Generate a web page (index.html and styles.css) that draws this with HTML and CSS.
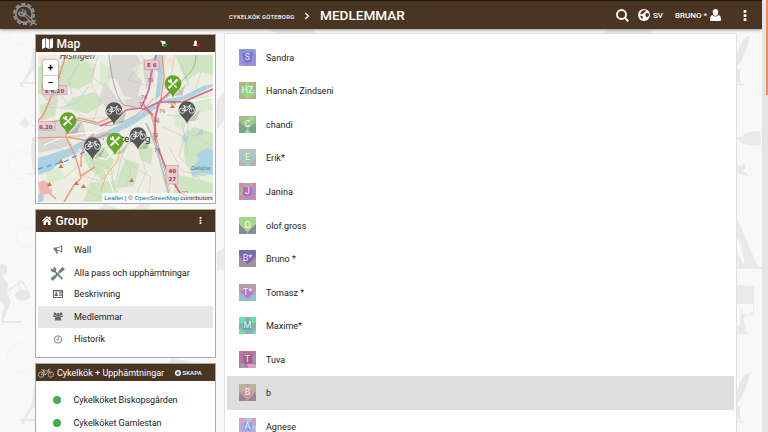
FILE: index.html
```html
<!DOCTYPE html>
<html lang="sv">
<head>
<meta charset="utf-8">
<title>Medlemmar</title>
<link rel="stylesheet" href="styles.css">
</head>
<body>
<svg class="defs" width="0" height="0">
  <defs>
    <symbol id="bike" viewBox="0 0 30 18"><g fill="none" stroke="currentColor" stroke-width="1.5"><circle cx="6" cy="12" r="5"/><circle cx="24" cy="12" r="5"/><path d="M6 12 11 5H20L14 12H6M14 12 9.500 3M7 3H12M24 12 19 2H23"/></g></symbol>
    <symbol id="tools" viewBox="0 0 24 24"><path fill="none" stroke="currentColor" stroke-width="3" d="M6 7 20 21M3 22 14 11"/><path fill="currentColor" d="M1 3 5 6 6 1Q12 3 9 9L6 10Q1 10 1 3ZM13 9 20 1 24 5 16 12ZM1 20 8 14 11 17 4 24Z"/></symbol>
    <symbol id="dots" viewBox="0 0 4 12"><path fill="currentColor" d="M.5 0h3v3h-3zM.5 4.500h3v3h-3zM.5 9h3v3h-3z"/></symbol>
    <symbol id="pin" viewBox="0 0 18 23"><path fill="currentColor" d="M9 22.500C7 17 .5 14 .5 8.500A8.500 8.300 0 0 1 17.500 8.500C17.500 14 11 17 9 22.500Z"/></symbol>
    <symbol id="runner" viewBox="0 0 34 67"><g fill="#e7e7e7"><path d="M7 1Q12 2 11 8Q10 12 6 12L12 21 11 30 15 39 7 58H25V60H5L8 42 0 36V2Z"/><ellipse cx="27" cy="32" rx="8" ry="5.500"/></g><path fill="none" stroke="#e7e7e7" stroke-width="1.500" d="M10 29 23 20M24 29 23 18Q28 18 32 29"/></symbol>
    <symbol id="walker" viewBox="0 0 18 44"><path fill="#e8e8e8" d="M14 4Q18 2 18 6V36H15V25L6 37 3 39 12 22 13 12ZM0 38H16V40H4L5 43H2Z"/></symbol>
    <symbol id="feather" viewBox="0 0 14 56"><path fill="#e7e7e7" d="M0 20Q4 6 13 2Q10 20 0 34ZM0 36H3V49H0ZM0 50 8 52V53L0 52Z"/></symbol>
  </defs>
</svg>

<svg class="backdrop" width="762" height="432" viewBox="0 0 762 432">
  <g fill="#e9e9e9">
    <use href="#runner" x="-4" y="263" width="34" height="67"/>
    <use href="#walker" x="19" y="44" width="18" height="44"/>
    <use href="#walker" x="20" y="381" width="18" height="44"/>
    <path d="M24 118 30 123 26 128 19 124ZM30 124 36 126V128ZM32 138Q36 134 36 140V174H26V173H33L31 152Z"/>
    <use href="#feather" x="737" y="33" width="14" height="56"/>
    <use href="#feather" x="737" y="370" width="14" height="56"/>
    <path d="M742 137Q745 130 760 131L761 145Q748 147 742 143L737 139V137ZM737 164 741 166 745 163V169L742 171 748 174V176L737 173Z"/>
    <path d="M737 218 758 267H762V269H737V252L745 267Q742 242 737 238ZM737 285 754 286V315L748 317 749 314 753 312V304H737ZM741 309Q744 311 742 315L746 313 747 316 743 318 746 327 744 330 749 334H737V328L740 325Z"/>
    <path d="M217 100 224 92V120L217 130ZM217 252 224 248V270H217ZM268 29H315V33H275ZM608 29H652V33H602ZM105 203 121 210H98ZM140 203H152L146 209H134ZM172 358 196 363H168Z"/>
  </g>
  <g fill="none" stroke="#f4f4f4"><circle cx="22" cy="165" r="14"/><circle cx="26" cy="237" r="10"/><circle cx="22" cy="358" r="15"/><circle cx="18" cy="36" r="9"/></g>
</svg>

<header class="topbar">
  <svg class="logo" viewBox="0 0 26 24" width="26" height="24"><g fill="none" stroke="#8d9297"><circle cx="12" cy="11" r="10" stroke-width="2" stroke-dasharray="4.200 2.080"/><circle cx="12" cy="11" r="8.300" stroke-width="1.700"/><path stroke-width="3.600" d="M11 10 22 20"/><path stroke="#4a3522" stroke-width="1.200" d="M12 11 22 20"/><path stroke-width="1.500" d="M7 9 10 10 11 6M7 9Q6 13 11 13Q15 11 13 7M18 22.500 23.500 17M19.500 17 24.500 22"/></g></svg>
  <span class="crumb">CYKELKÖK GÖTEBORG</span>
  <svg class="chev" width="6" height="8" viewBox="0 0 6 8"><path d="M1.300 1 4.500 4 1.300 7" fill="none" stroke="#fff" stroke-width="1.200"/></svg>
  <h1>MEDLEMMAR</h1>
  <nav class="tools">
    <svg width="13" height="13" viewBox="0 0 13 13"><g fill="none" stroke="#fff" stroke-width="1.900"><circle cx="5.500" cy="5.500" r="4.500"/><path d="M8.700 8.700 12.300 12.300"/></g></svg>
    <svg class="globe" width="12" height="12" viewBox="0 0 12 12"><circle cx="6" cy="6" r="6" fill="#fff"/><path fill="#4a3522" d="M6 1 8 1.500 7 3 5 4.500 4 5.500 2 4.500 4 2ZM7.500 4.500 10.500 4 11 6.500 9 8.500 7.500 7ZM2 6.500 5 7.500 4.500 10 3 9Z"/></svg>
    <span class="lang">SV</span>
    <span class="user">BRUNO *</span>
    <svg class="person" width="11" height="12" viewBox="0 0 11 12"><path fill="#fff" d="M5.500 0C7.500 0 8.500 1.300 8.300 3.500C8 6 7 6.800 5.500 6.800S3 6 2.700 3.500C2.500 1.300 3.500 0 5.500 0ZM2.400 6Q5.500 9 8.600 6Q11 6.500 11 11Q11 12 10 12H1Q0 12 0 11Q0 6.500 2.400 6Z"/></svg>
    <svg class="more" width="4" height="11"><use href="#dots"/></svg>
  </nav>
</header>
<div class="scroll"><div class="thumb"></div></div>

<div class="layout">
  <aside>
    <section class="panel map-panel">
      <div class="head map-head">
        <svg width="11" height="11" viewBox="0 0 11 11"><path fill="#fff" d="M0 1.500 3.300 0V9.500L0 11ZM3.900 0 7.100 1.500V11L3.900 9.500ZM7.700 1.500 11 0V9.500L7.700 11Z"/></svg>
        <h2>Map</h2>
        <svg class="cart" width="8" height="8" viewBox="0 0 8 8"><path fill="#fff" d="M0 .7H1.500L5.500 1.500V4H2L1.200 1.500H0ZM2 4.500H4V6H2Z"/><path d="M3 5 4.600 6.500 7.200 3.700" fill="none" stroke="#16b42b" stroke-width="1.400"/></svg>
        <svg class="usr" width="8" height="8" viewBox="0 0 8 8"><path fill="#fff" d="M2.500.5Q4.300.5 4 2.500L3.700 3.500 5 6H0L1.200 3.500Q.8.500 2.500.5Z"/><path d="M3.700 3.700 6.800 6.800M6.800 3.700 3.700 6.800" stroke="#e01818" stroke-width="1.300"/></svg>
      </div>
      <div class="map">
        <svg width="175" height="147" viewBox="0 0 175 147">
          <rect width="175" height="147" fill="#eeede2"/>
          <path fill="#cfe5c1" d="M0 12 12 7 22 12 36 0 58 10 54 27 41 34 28 31 17 45 0 38ZM34 43 56 37 66 48 49 59 27 51ZM2 50 20 45 17 61 3 66ZM137 0H175V20L161 17 148 27ZM144 80 156 72 175 78V119L155 123 147 105ZM42 94 65 92 76 106 65 126 51 113ZM88 104 101 109 96 131 77 134 82 117ZM53 128 77 125 82 147H45ZM97 80 115 94 113 110 103 105ZM137 119 175 128V147H135Z"/>
          <path fill="#dcebd0" d="M62 7 74 16 70 34 62 29ZM88 4 102 10 98 28 88 24ZM151 45 171 39 175 55 156 59ZM8 115 22 112 26 124 9 130ZM138 58 152 62 145 76 136 70Z"/>
          <path fill="#d9d8d5" d="M74 0H99L103 8 94 14 104 26 99 44 86 41 78 24 69 23ZM67 27 79 43 91 52 72 55 61 44ZM0 70 22 64 45 67 48 81 31 84 24 81 0 83ZM0 84H28L35 90 20 94 0 98ZM17 66 26 70 34 63 48 64ZM104 7 117 2 116 26 108 35ZM4 40 14 36 20 45 14 52ZM117 0 128 0 124 19 116 15ZM86 45 104 40 107 50 92 56Z"/>
          <path fill="#f7e0d0" d="M0 5 7 2 11 8 6 12ZM39 0 51 0 48 7ZM128 5 136 2 134 13ZM51 11 56 8 58 14Z"/>
          <path fill="#add3e2" d="M0 103 29 94 51 82 69 76 89 66 106 56 121 45 127 46 107 62 91 72 71 81 53 88 39 98 23 105 14 115 0 120ZM118 0H123L125 20 122 41 117 45 120 20ZM125 45 145 41 165 31 175 29V31L152 43 131 49ZM153 114 161 105 158 99 169 93 175 96V120L163 118 154 121ZM144 84 151 80 149 88ZM157 81 164 73 165 79ZM0 139 6 140 5 147H0Z"/>
          <path fill="none" stroke="#9bcfe1" stroke-width=".6" d="M9 10 22 22 17 33 29 48M41 9 31 25 34 40M27 0 22 13M51 31 38 48 24 52M143 8 151 31M163 16 158 34M84 99 78 127M144 67 150 98"/>
          <path fill="none" stroke="#c9c6c1" stroke-width=".6" d="M52 26 62 46 55 67M60 0 54 22 66 31M7 86 27 96 48 89 64 102 82 97 93 115 88 132M40 91 61 115 48 135 70 147M26 122 51 104 73 114 76 135M42 120 62 126 76 116M80 84 101 93 108 117 96 145M87 106 113 122 110 147M124 72 146 82 141 101 165 128M129 60 151 63 149 77 175 91M137 0 133 22 144 39 150 60M131 92 144 116 168 121M70 85 55 98 43 96M11 52 35 54 48 64 75 62M105 6 90 25 111 31M103 0 112 17"/>
          <path fill="none" stroke="#8d9090" stroke-width=".7" d="M71 0Q75 39 86 50L107 54 113 59 134 147M0 69Q32 62 54 68Q76 77 105 55L116 43M158 0Q159 12 146 24L128 43"/>
          <path fill="none" stroke="#fff" stroke-width="1" d="M6 90 30 80 57 77 80 60 101 52M40 94 68 105 78 93M67 114 77 141M106 70 119 91 134 147M130 51 175 42"/>
          <path fill="none" stroke="#f0b981" stroke-width="1.100" d="M82 89 80 105 68 121 63 136M72 78 82 91"/>
          <path fill="none" stroke="#ef9a7e" stroke-width="1.500" d="M28 0 20 25 6 59 0 66M0 83 28 82 29 70 41 63 60 68 76 61M28 82Q40 104 43 123L36 130 26 147M56 79Q42 88 43 112M124 0 126 22 123 44 117 61 118 88 121 98M30 82 51 86 72 78M107 54 121 68M43 121 57 112M0 128 18 144"/>
          <path fill="none" stroke="#d9688a" stroke-width="1.700" d="M118 0 113 20 111 34 107 44 103 53 88 55 79 64 62 71M104 55 121 47 145 47 175 34M140 27 129 40 121 47Q117 60 117 74L117 88 123 101 131 120 142 138 151 142 175 142M106 51 115 60"/>
          <path fill="none" stroke="#bcc2c6" stroke-width="2.200" d="M108 68 118 91 133 147"/>
          <path fill="none" stroke="#668bea" stroke-width="1.300" stroke-dasharray="5 4" d="M0 114 28 106 50 95 66 84"/>
          <path fill="#ecb9b2" d="M0 128 6 125 12 130 10 139 2 140ZM10 135 14 133 14 141Z"/>
          <g fill="#c8794a"><path d="M20.500 108 23 104 25.500 108ZM20.500 113 23 109 25.500 113ZM9 131 11.500 127 14 131ZM36 130 38.500 126 41 130ZM43 133 45.500 129 48 133ZM91 127 93.500 123 96 127ZM132 53 134.500 49 137 53Z"/></g>
          <g class="shield"><rect x="106.500" y="5" width="14.500" height="9.500"/><rect x="4" y="30.500" width="25" height="9"/><rect x="-4" y="66.500" width="21" height="8.500"/><rect x="128" y="110.500" width="12" height="18.500"/></g>
          <g class="road"><text x="109" y="12">E 6</text><text x="7" y="37.500">E 6.20</text><text x="1" y="73.500">6.20</text><text x="130.500" y="118">40</text><text x="130.500" y="125.500">27</text></g>
          <g class="route"><text x="109" y="27">78</text><text x="103" y="44">76</text><text x="101" y="51">75</text><text x="121" y="58">76</text><text x="132" y="50">76</text><text x="115" y="67">40</text><text x="114" y="82">72</text><text x="116" y="97">70</text><text x="144" y="140">72</text></g>
          <text class="place" x="22" y="3.500">Hisingen</text><text class="city" x="70" y="87">Göteborg</text><text class="lake" x="153" y="115">Delsjöar</text>
          <path d="M136 41 148 29 144 40ZM31 79 44 66 39 78ZM77 68 89 56 85 68ZM150 66 163 54 157 66ZM56 103 68 91 63 102ZM79 99 91 87 86 98ZM101 94 113 82 109 94Z" fill="#555" opacity=".25"/>
          <g color="#62a828"><use href="#pin" x="126" y="20" width="18" height="23"/><use href="#pin" x="21" y="57" width="18" height="23"/><use href="#pin" x="68" y="77.500" width="18" height="23"/></g>
          <g color="#565657"><use href="#pin" x="67" y="47" width="18" height="23"/><use href="#pin" x="140" y="46" width="18" height="23"/><use href="#pin" x="45.500" y="82" width="18" height="23"/><use href="#pin" x="91" y="72" width="18" height="23"/></g>
          <g color="#fff"><use href="#tools" x="129.500" y="23" width="11" height="11"/><use href="#tools" x="24.500" y="60" width="11" height="11"/><use href="#tools" x="71.500" y="80.500" width="11" height="11"/><use href="#bike" x="68" y="50" width="16" height="10"/><use href="#bike" x="141" y="49" width="16" height="10"/><use href="#bike" x="46.500" y="85" width="16" height="10"/><use href="#bike" x="92" y="75" width="16" height="10"/></g>
        </svg>
        <div class="zoom"><span>+</span><span>−</span></div>
        <div class="credit"><a>Leaflet</a> | © <a>OpenStreetMap</a> contributors</div>
      </div>
    </section>

    <section class="panel group">
      <div class="head group-head">
        <svg width="10" height="9" viewBox="0 0 10 9"><path fill="#fff" d="M5 0 7 1.800V.7H8.400V3L10 4.600 9.300 5.400 5 1.700.7 5.400 0 4.600ZM1.500 5.500 5 2.600 8.500 5.500V9H6V6.300H4V9H1.500Z"/></svg>
        <h2>Group</h2>
        <svg class="dots" width="3" height="7"><use href="#dots"/></svg>
      </div>
      <ul class="menu">
        <li><svg width="10" height="9" viewBox="0 0 10 9"><path fill="none" stroke="#777" stroke-width="1" d="M4 2.700Q7 2.500 8.500 1V7Q7 5.500 4 5.200"/><path fill="#777" d="M1 2.500H4V5.400L5 8.500H3L2.200 5.500H1Q0 4 1 2.500ZM8.300.4H9.200V7.600H8.300Z"/></svg><span>Wall</span></li>
        <li class="passes"><svg class="big" width="15" height="15"><use href="#tools"/></svg><span>Alla pass och upphämtningar</span></li>
        <li><svg width="10" height="8" viewBox="0 0 10 8"><path fill="#666" fill-rule="evenodd" d="M0 0H10V8H0ZM1 1.500V7H9V1.500Z"/><path fill="#666" d="M1.500 6Q1.500 4 2.500 4Q2 2 3.300 2T4 4Q5 4 5 6ZM6 2.300H9V3.500H6ZM6 4.500H9V5.700H6Z"/></svg><span>Beskrivning</span></li>
        <li class="active"><svg width="10" height="9" viewBox="0 0 10 9"><g fill="#666"><circle cx="1.900" cy="1.900" r="1.400"/><circle cx="8.100" cy="1.900" r="1.400"/><circle cx="5" cy="3" r="1.900"/><path d="M0 3.500H3L3.500 5H0ZM7 3.500H10V5H6.500ZM2.500 4.700H7.500L8.500 8.500H1.500Z"/></g></svg><span>Medlemmar</span></li>
        <li><svg width="10" height="9" viewBox="0 0 10 9"><g fill="none" stroke="#777" stroke-width=".9"><circle cx="5" cy="4.500" r="3.700"/><path d="M5.200 2V4.800H3.300"/></g></svg><span>Historik</span></li>
      </ul>
    </section>

    <section class="panel pickups">
      <div class="head pick-head">
        <svg width="16" height="10"><use href="#bike"/></svg>
        <h3>Cykelkök + Upphämtningar</h3>
        <svg class="add" width="6" height="6" viewBox="0 0 6 6"><circle cx="3" cy="3" r="3" fill="#fff"/><path d="M3 1.300V4.700M1.300 3H4.700" stroke="#4a3522" stroke-width="1"/></svg>
        <b>SKAPA</b>
      </div>
      <ul class="places"><li><i></i><span>Cykelköket Biskopsgården</span></li><li><i></i><span>Cykelköket Gamlestan</span></li></ul>
    </section>
  </aside>

  <main>
    <ul class="members">
      <li><svg class="av" viewBox="0 0 17 17"><path fill="#8c94d6" d="M0 0H17V17H0Z"/><path fill="#7b70c8" d="M3 4 14 3 12 13 6 14Z"/><path fill="#a48be0" d="M0 10 6 14 4 17H0ZM17 7V17H10Z"/><path fill="#7fb0dc" d="M13 0H17V6ZM0 15 8 17H0Z"/><text x="8.500" y="11">S</text></svg><span>Sandra</span></li>
      <li><svg class="av" viewBox="0 0 17 17"><path fill="#b9ae86" d="M0 0H17V17H0Z"/><path fill="#a5c987" d="M0 11 5 4H12L17 11 8.500 17Z"/><path fill="#8fdf6b" d="M6 3 8.500 0 11 3 13 9 8.500 17 5 9Z"/><path fill="#6fd8cf" d="M0 10 2 8 4 10 2 12ZM17 10 15 8 13 10 15 12Z"/><text x="8.500" y="11">HZ</text></svg><span>Hannah Zindseni</span></li>
      <li><svg class="av" viewBox="0 0 17 17"><path fill="#9fc386" d="M0 0H17V17H0Z"/><path fill="#76a58b" d="M0 5 8.500 13 17 7V17H0Z"/><path fill="#8fe0a5" d="M9 2 13 0 16 3 11 5ZM5 17 8.500 13 12 17Z"/><text x="8.500" y="11">C</text></svg><span>chandi</span></li>
      <li><svg class="av" viewBox="0 0 17 17"><path fill="#b4c5bf" d="M0 0H17V17H0Z"/><path fill="#b2b1ac" d="M0 9 8 17H0ZM17 9V17H9Z"/><path fill="#a6c6b2" d="M1 10 8.500 4 16 10 8.500 16Z"/><path fill="#92cfe8" d="M1 8 3 10 1 12ZM16 8V12L14 10ZM7 17 9 14 11 17Z"/><text x="8.500" y="11">E</text></svg><span>Erik*</span></li>
      <li><svg class="av" viewBox="0 0 17 17"><path fill="#b0a79e" d="M0 0H17V17H0Z"/><path fill="#ba6bb8" d="M4 4H13V13H4Z"/><path fill="#dc7fae" d="M0 0H4V4H0ZM13 0H17V4H13ZM0 13H4V17H0ZM13 13H17V17H13Z"/><path fill="#a49ac8" d="M5 13H13V17H5ZM13 5H17V12H13Z"/><text x="8.500" y="11">J</text></svg><span>Janina</span></li>
      <li><svg class="av" viewBox="0 0 17 17"><path fill="#9fd98c" d="M0 0H17V17H0Z"/><path fill="#7f8d9c" d="M0 7 8.500 15 17 7V17H0Z"/><path fill="#b9d184" d="M3 9 8.500 4 14 9 8.500 15Z"/><path fill="#d991cf" d="M7 17 8.500 15 10 17Z"/><text x="8.500" y="11">O</text></svg><span>olof.gross</span></li>
      <li><svg class="av" viewBox="0 0 17 17"><path fill="#a1929b" d="M0 0H17V17H0Z"/><path fill="#756fa9" d="M0 0H17L16 8 8.500 14 0 6Z"/><path fill="#8260bd" d="M2 6 8.500 3 15 7 8.500 14Z"/><path fill="#cb77bb" d="M7 17 8.500 14 10 17Z"/><text x="8.500" y="11">B*</text></svg><span>Bruno *</span></li>
      <li><svg class="av" viewBox="0 0 17 17"><path fill="#b99da5" d="M0 0H17V17H0Z"/><path fill="#8cc3ce" d="M0 9 5 12 8.500 15 17 9V17H0Z"/><path fill="#a27dd8" d="M2 8 8.500 3 15 8 8.500 14Z"/><path fill="#c4aa7d" d="M6 17 8.500 14 11 17Z"/><path fill="#dc8bd5" d="M0 7 3 9 0 11ZM17 7V11L14 9Z"/><text x="8.500" y="11">T*</text></svg><span>Tomasz *</span></li>
      <li><svg class="av" viewBox="0 0 17 17"><path fill="#94a9b9" d="M0 0H17V17H0Z"/><path fill="#65e6a1" d="M0 0H7L3 7 0 5ZM11 0H17V5L13 7ZM0 12 7 15 6 17H0ZM17 11V17H13Z"/><path fill="#50afa5" d="M5 4 13 5 12 13 4 12Z"/><text x="8.500" y="11">M</text></svg><span>Maxime*</span></li>
      <li><svg class="av" viewBox="0 0 17 17"><path fill="#b17999" d="M0 0H17V17H0Z"/><path fill="#a06288" d="M4 4 13 3 14 12 5 13Z"/><path fill="#be72bd" d="M0 0H4L3 7 0 8ZM12 0H17V4H13Z"/><path fill="#9c94b7" d="M0 13 5 12 8 17H0ZM13 6 17 4V12H14Z"/><path fill="#d6a4c2" d="M8 13H17V17H9Z"/><text x="8.500" y="11">T</text></svg><span>Tuva</span></li>
      <li class="selected"><svg class="av" viewBox="0 0 17 17"><path fill="#b9b39b" d="M0 0H17V17H0Z"/><path fill="#9d829c" d="M0 8 8.500 16 17 8V17H0Z"/><path fill="#d09493" d="M3 9 8.500 3 14 9 8.500 15Z"/><path fill="#d67cb5" d="M7 0H10L8.500 3ZM0 7 3 9 0 11ZM17 7V11L14 9ZM7 17 8.500 15 10 17Z"/><text x="8.500" y="11">B</text></svg><span>b</span></li>
      <li><svg class="av" viewBox="0 0 17 17"><path fill="#b4aee0" d="M0 0H17V17H0Z"/><path fill="#e49abb" d="M0 0H8L4 5 0 4ZM12 0H17V7L13 5ZM0 13 5 15V17H0Z"/><path fill="#91a0df" d="M5 4 13 5 12 13 4 12Z"/><path fill="#9ed5ed" d="M8 0H12V4H8ZM13 8H17V14Z"/><text x="8.500" y="11">A</text></svg><span>Agnese</span></li>
    </ul>
  </main>
</div>
</body>
</html>
```

FILE: styles.css
```css
* { box-sizing: border-box; }
html, body { height: 432px; overflow: hidden; }
body { margin: 0; background: #f8f8f8; font-family: Roboto, "Liberation Sans", sans-serif; font-size: 9px; color: #222; }
svg { display: block; flex: none; }
ul, h1, h2, h3 { margin: 0; padding: 0; list-style: none; }
.defs, .backdrop { position: absolute; top: 0; left: 0; }

.topbar { position: relative; width: 762px; height: 28.500px; display: flex; align-items: center; background: #4a3522; border-top: 1px solid #231811; box-shadow: 0 1px 3px rgba(0,0,0,.4); color: #fff; white-space: nowrap; }
.logo { margin-left: 12px; }
.crumb { width: 66px; margin-left: 191px; margin-top: 3px; font-size: 6px; font-weight: 500; letter-spacing: .2px; }
.chev { margin-left: 9px; margin-top: 2px; }
.topbar h1 { width: 88px; margin-left: 10px; font-size: 13.600px; font-weight: 500; }
.tools { display: flex; align-items: center; margin-left: 208px; margin-top: 1px; font-size: 8px; font-weight: 500; }
.globe { margin-left: 9px; }
.lang { width: 12px; margin-left: 3px; }
.user { width: 33px; margin-left: 10px; }
.person { margin-left: 2px; }
.more { margin-left: 22px; }

.scroll { position: absolute; top: 0; right: 0; width: 6px; height: 432px; background: #e4e4e4; }
.thumb { width: 2px; height: 94.500px; margin-left: 4px; background: #f08a64; }

.layout { position: relative; display: flex; align-items: flex-start; gap: 8px; padding: 4.500px 0 0 35px; }
aside { width: 181px; display: flex; flex-direction: column; gap: 5px; padding-top: 1px; }
.panel { background: #fff; border: 1px solid #aaa; }
.head { display: flex; align-items: center; background: #4a3522; color: #fff; white-space: nowrap; }
.map-panel { height: 169.500px; }
.map-head { height: 17px; padding-left: 6px; }
.head h2 { font-size: 12px; font-weight: 500; margin-left: 3.500px; }
.map-head h2 { width: 103px; }
.usr { margin-left: 25px; }
.map { position: relative; width: 175px; height: 147px; margin: 3px 0 0 2px; overflow: hidden; }
.zoom { position: absolute; left: 5px; top: 5px; width: 15px; height: 30px; background: #fff; border-radius: 2px; box-shadow: 0 0 2px rgba(0,0,0,.6); display: grid; grid-template-rows: 15px 15px; text-align: center; line-height: 15px; font-size: 10px; font-weight: 700; color: #000; }
.zoom span + span { border-top: 1px solid #ccc; line-height: 14px; }
.credit { position: absolute; right: 0; bottom: 0; padding: 0 0 0 2px; background: rgba(255,255,255,.75); font: 6.250px/9px "Liberation Sans", sans-serif; color: #333; white-space: nowrap; }
.credit a { color: #0078a8; }
.shield { fill: #eccbd0; stroke: #c592a0; stroke-width: .6; }
.road { font: 700 5.500px "DejaVu Sans", sans-serif; fill: #89455c; }
.route { font: 5px "DejaVu Sans", sans-serif; fill: #b74f6b; }
.place { font: italic 8px "DejaVu Sans", sans-serif; fill: #444; }
.city { font: 9.500px "Noto Sans", sans-serif; fill: #222; }
.lake { font: italic 5.500px "Liberation Sans", sans-serif; fill: #567c89; }

.group { height: 149.500px; }
.group-head { height: 22.500px; padding-left: 6px; }
.group-head h2 { width: 143px; }
.menu { padding: 6.500px 2px 0; }
.menu li { display: flex; align-items: center; height: 22.400px; }
.menu .passes { padding-top: 2px; }
.menu svg { width: 10px; margin-left: 15px; color: #6e8080; }
.menu .big { width: 15px; margin-left: 12px; margin-right: -2px; }
.menu span { margin-left: 11px; }
.menu .passes span { letter-spacing: -.04px; }
.menu .active { background: #e7e7e7; }
.pickups { height: 90px; border-bottom: 0; }
.pick-head { height: 17px; padding-left: 2px; }
.pick-head h3 { width: 109px; margin-left: 3px; font-size: 9px; font-weight: 400; }
.pick-head svg:first-child { color: #c8c0b8; }
.add { margin-left: 8.500px; }
.pick-head b { margin-left: 2px; font-size: 6px; font-weight: 500; letter-spacing: .1px; }
.places { padding-top: 8px; }
.places li { display: flex; align-items: center; height: 22.500px; padding-left: 17px; }
.places i { width: 8px; height: 8px; border-radius: 50%; background: #45ad4e; }
.places span { margin-left: 12.500px; letter-spacing: -.05px; }

main { width: 513px; height: 410px; background: #fff; border: 1px solid #e1e1e1; }
.members { padding: 6.500px 2px 0; }
.members li { display: flex; align-items: center; height: 33.550px; padding-left: 12px; }
.members .selected { background: #dedede; }
.members span { margin-left: 10px; padding-top: 1px; }
.av { width: 17px; height: 17px; }
.av text { font: 9px Roboto, sans-serif; fill: #fff; fill-opacity: .9; text-anchor: middle; }
```
